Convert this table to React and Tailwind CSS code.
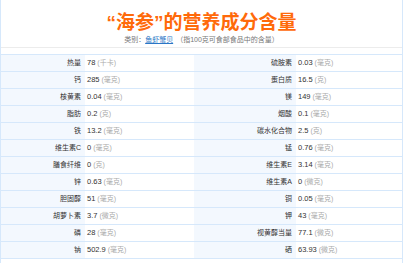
import React from "react";

const rows = [
  ["热量", "78", "(千卡)", "硫胺素", "0.03", "(毫克)"],
  ["钙", "285", "(毫克)", "蛋白质", "16.5", "(克)"],
  ["核黄素", "0.04", "(毫克)", "镁", "149", "(毫克)"],
  ["脂肪", "0.2", "(克)", "烟酸", "0.1", "(毫克)"],
  ["铁", "13.2", "(毫克)", "碳水化合物", "2.5", "(克)"],
  ["维生素C", "0", "(毫克)", "锰", "0.76", "(毫克)"],
  ["膳食纤维", "0", "(克)", "维生素E", "3.14", "(毫克)"],
  ["锌", "0.63", "(毫克)", "维生素A", "0", "(微克)"],
  ["胆固醇", "51", "(毫克)", "铜", "0.05", "(毫克)"],
  ["胡萝卜素", "3.7", "(微克)", "钾", "43", "(毫克)"],
  ["磷", "28", "(毫克)", "视黄醇当量", "77.1", "(微克)"],
  ["钠", "502.9", "(毫克)", "硒", "63.93", "(微克)"],
];

function Label({ children }) {
  return (
    <div className="h-[17px] border-b border-[#d6e8fb] bg-[#f3f8fe] flex items-center justify-end pr-[4px] text-[#333] text-[7px]">
      {children}
    </div>
  );
}

function Value({ v, u }) {
  return (
    <div className="h-[17px] border-b border-[#d6e8fb] bg-white flex items-center pl-[2px] text-[7.5px]">
      <span className="text-[#333]">{v}</span>
      <span className="text-[#aaa] ml-[2px] text-[7px]">{u}</span>
    </div>
  );
}

export default function App() {
  return (
    <div
      className="w-[403px] h-[263px] bg-white border-l border-r border-[#d6e8fb] overflow-hidden"
      style={{ fontFamily: '"Liberation Sans", "Noto Sans CJK SC", sans-serif' }}
    >
      <div className="flex flex-col items-center pt-[11px]">
        <div className="text-[19px] leading-[23px] font-bold text-[#ff6a0a]">
          “海参”的营养成分含量
        </div>
        <div className="text-[7px] leading-[10px] text-[#777] mt-[1px]">
          类别：<span className="text-[#2a76c6] underline">鱼虾蟹贝</span>
          <span className="ml-[3px]">（指100克可食部食品中的含量）</span>
        </div>
      </div>
      <div className="mt-[2px] border-t border-[#ececec]" />
      <div className="mt-[6px] border-t border-[#d6e8fb] grid grid-cols-[84px_109px_102px_1fr]">
        {rows.map((r, i) => (
          <React.Fragment key={i}>
            <Label>{r[0]}</Label>
            <Value v={r[1]} u={r[2]} />
            <Label>{r[3]}</Label>
            <Value v={r[4]} u={r[5]} />
          </React.Fragment>
        ))}
      </div>
    </div>
  );
}
